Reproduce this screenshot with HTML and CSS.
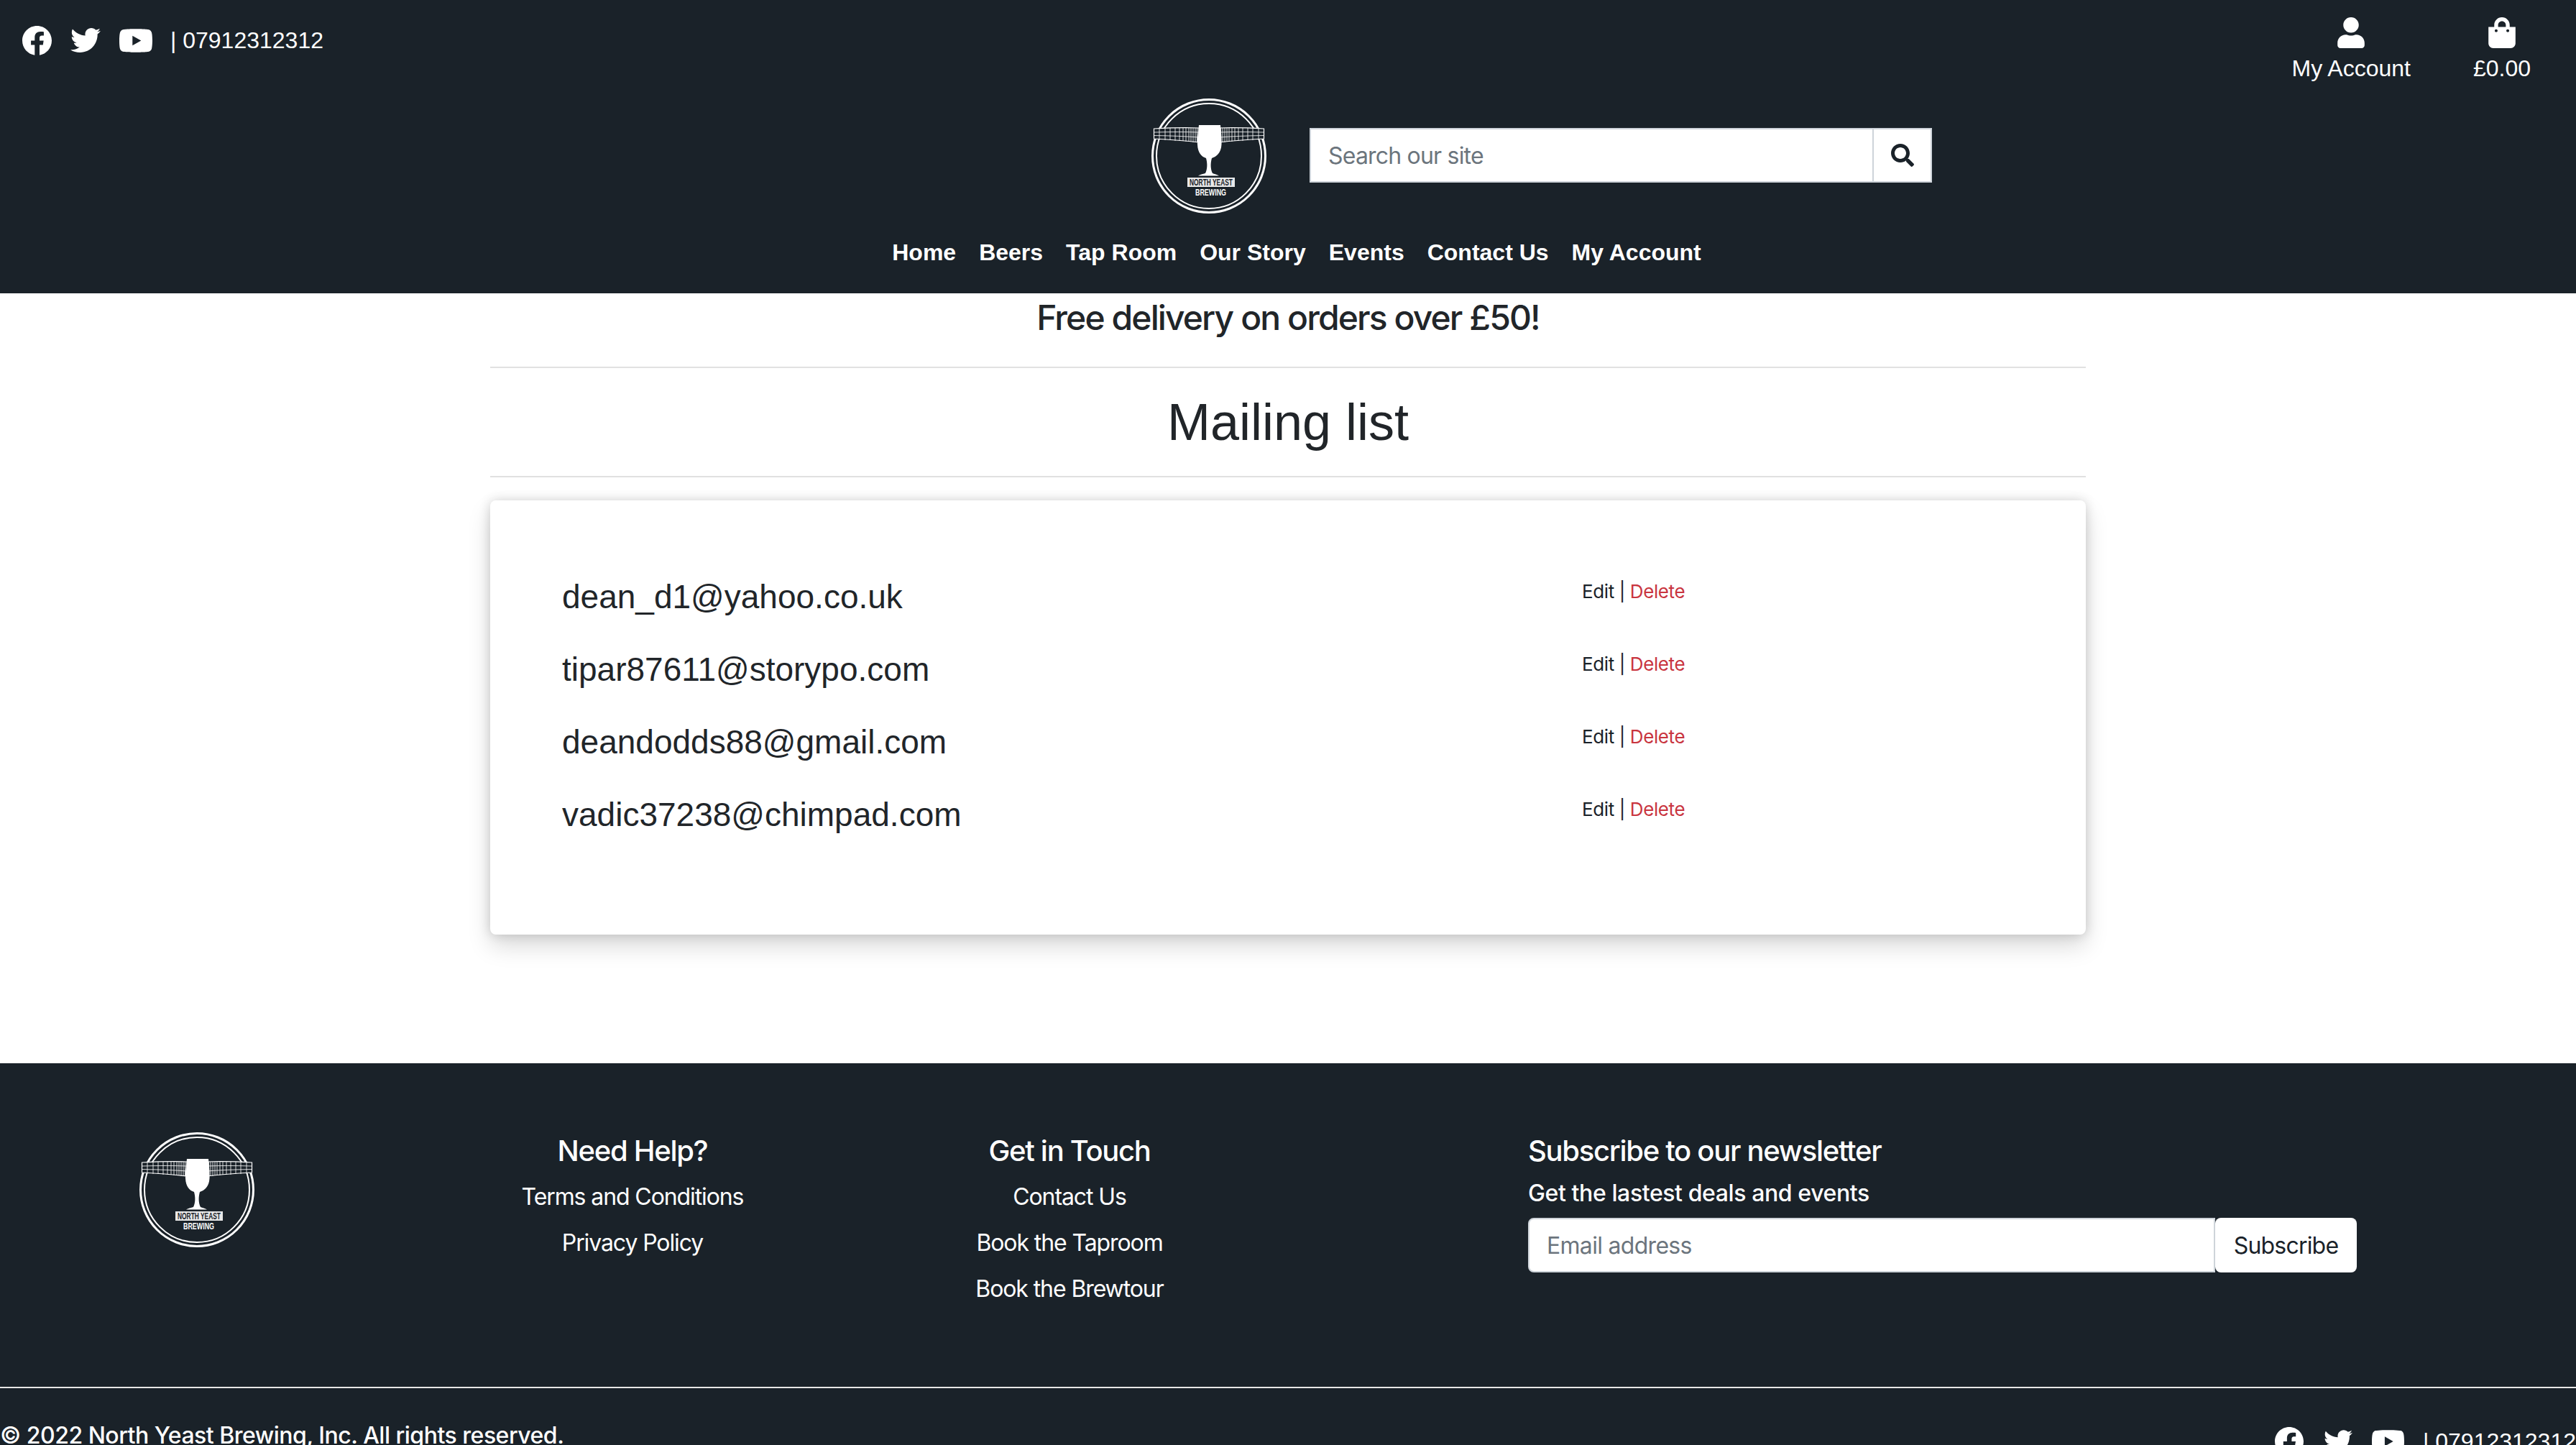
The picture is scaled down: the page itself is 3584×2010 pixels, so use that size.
FILE: index.html
```html
<!DOCTYPE html>
<html lang="en">
<head>
<meta charset="utf-8">
<title>Mailing list | North Yeast Brewing</title>
<link rel="stylesheet" href="styles.css">
</head>
<body>
<svg class="defs" width="0" height="0" aria-hidden="true">
  <symbol id="i-fb" viewBox="8 8 496 496"><path d="M504 256C504 119 393 8 256 8S8 119 8 256c0 123.78 90.69 226.38 209.25 245V327.69h-63V256h63v-54.64c0-62.15 37.92-96.48 96-96.48 27.82 0 56.89 5 56.89 5v61h-31.34c-30.88 0-40.51 19.16-40.51 38.71V256h68.78l-11 71.69h-57.78V501C413.31 482.38 504 379.78 504 256z"/></symbol>
  <symbol id="i-tw" viewBox="0 48 512 416"><path d="M459.37 151.716c.325 4.548.325 9.097.325 13.645 0 138.72-105.583 298.558-298.558 298.558-59.452 0-114.68-17.219-161.137-47.106 8.447.974 16.568 1.299 25.34 1.299 49.055 0 94.213-16.568 130.274-44.832-46.132-.975-84.792-31.188-98.112-72.772 6.498.974 12.995 1.624 19.818 1.624 9.421 0 18.843-1.3 27.614-3.573-48.081-9.747-84.143-51.98-84.143-102.985v-1.299c13.969 7.797 30.214 12.67 47.431 13.319-28.264-18.843-46.781-51.005-46.781-87.391 0-19.492 5.197-37.36 14.294-52.954 51.655 63.675 129.3 105.258 216.365 109.807-1.624-7.797-2.599-15.918-2.599-24.04 0-57.828 46.782-104.934 104.934-104.934 30.213 0 57.502 12.67 76.67 33.137 23.715-4.548 46.456-13.32 66.599-25.34-7.798 24.366-24.366 44.833-46.132 57.827 21.117-2.273 41.584-8.122 60.426-16.243-14.292 20.791-32.161 39.308-52.628 54.253z"/></symbol>
  <symbol id="i-yt" viewBox="15 64 546 384"><path d="M549.655 124.083c-6.281-23.65-24.787-42.276-48.284-48.597C458.781 64 288 64 288 64S117.22 64 74.629 75.486c-23.497 6.322-42.003 24.947-48.284 48.597-11.412 42.867-11.412 132.305-11.412 132.305s0 89.438 11.412 132.305c6.281 23.65 24.787 41.5 48.284 47.821C117.22 448 288 448 288 448s170.78 0 213.371-11.486c23.497-6.321 42.003-24.171 48.284-47.821 11.412-42.867 11.412-132.305 11.412-132.305s0-89.438-11.412-132.305zm-317.51 213.508V175.185l142.739 81.205-142.739 81.201z"/></symbol>
  <symbol id="i-user" viewBox="0 0 448 512"><path d="M224 256c70.7 0 128-57.3 128-128S294.7 0 224 0 96 57.3 96 128s57.3 128 128 128zm89.6 32h-16.7c-22.2 10.2-46.9 16-72.9 16s-50.6-5.8-72.9-16h-16.7C60.2 288 0 348.2 0 422.4V464c0 26.5 21.5 48 48 48h352c26.5 0 48-21.5 48-48v-41.6c0-74.2-60.2-134.4-134.4-134.4z"/></symbol>
  <symbol id="i-bag" viewBox="0 0 448 512"><path d="M352 160v-32C352 57.42 294.579 0 224 0 153.42 0 96 57.42 96 128v32H0v272c0 44.183 35.817 80 80 80h288c44.183 0 80-35.817 80-80V160h-96zm-192-32c0-35.29 28.71-64 64-64s64 28.71 64 64v32H160v-32zm160 120c-13.255 0-24-10.745-24-24s10.745-24 24-24 24 10.745 24 24-10.745 24-24 24zm-192 0c-13.255 0-24-10.745-24-24s10.745-24 24-24 24 10.745 24 24-10.745 24-24 24z"/></symbol>
  <symbol id="i-search" viewBox="0 0 512 512"><path d="M505 442.7L405.3 343c-4.5-4.5-10.6-7-17-7H372c27.6-35.3 44-79.7 44-128C416 93.1 322.9 0 208 0S0 93.1 0 208s93.1 208 208 208c48.3 0 92.7-16.4 128-44v16.3c0 6.4 2.5 12.5 7 17l99.7 99.7c9.4 9.4 24.6 9.4 33.9 0l28.3-28.3c9.4-9.4 9.4-24.6.1-34zM208 336c-70.7 0-128-57.2-128-128 0-70.7 57.2-128 128-128 70.7 0 128 57.2 128 128 0 70.7-57.2 128-128 128z"/></symbol>
  <symbol id="logo-art" viewBox="0 0 160 160">
    <circle cx="80" cy="80" r="78.5" fill="none" stroke="#fff" stroke-width="3"/>
    <circle cx="80" cy="80" r="73" fill="none" stroke="#fff" stroke-width="2"/>
    <path d="M3.500 42Q40 40 66 41V61Q40 58 3.500 56Z" fill="#1a2229" stroke="#fff" stroke-width="1.200"/>
    <path d="M156.500 42Q120 40 94 41V61Q120 58 156.500 56Z" fill="#1a2229" stroke="#fff" stroke-width="1.200"/>
    <path d="M3.500 47Q40 46 66 47M3.500 51.500Q40 52 66 54M94 47Q120 46 156.500 47M94 54Q120 52 156.500 51.500M11 41V57M19 41V58M26 41V58M33 41V59M39 41V59M44 41V59M48 41V60M52 41V60M55 41V60M58 41V61M61 41V61M63.500 41V61M96.500 41V61M99 41V61M102 41V61M105 41V60M108 41V60M112 41V60M116 41V59M121 41V59M127 41V59M134 41V58M141 41V58M149 41V57" stroke="#fff" stroke-width=".8" fill="none"/>
    <path d="M66 37H96C97 48 98 55 97.500 64C97 76 90 81 84 83C82 90 82 98 85 104C87 105 92 106 94 107.500H65C67 106 72 105 75 104C78 98 78 90 76 83C70 81 64.500 76 64 64C63.500 55 65 48 66 37Z" fill="#fff"/>
    <rect x="50" y="110" width="66" height="13" fill="#e8e8e8"/>
  </symbol>
</svg>

<header class="site-header">
  <div class="topbar">
    <div class="socials">
      <a href="#" class="social social-fb"><svg><use href="#i-fb"/></svg></a>
      <a href="#" class="social social-tw"><svg><use href="#i-tw"/></svg></a>
      <a href="#" class="social social-yt"><svg><use href="#i-yt"/></svg></a>
      <span class="phone">| 07912312312</span>
    </div>
    <div class="account-links">
      <a href="#" class="account-link"><svg class="account-icon"><use href="#i-user"/></svg>My Account</a>
      <a href="#" class="account-link"><svg class="account-icon"><use href="#i-bag"/></svg>£0.00</a>
    </div>
  </div>
  <div class="brand-row">
    <div class="brand-logo">
      <svg class="logo" viewBox="0 0 160 160"><use href="#logo-art"/><text class="logo-name" x="83" y="121" text-anchor="middle" textLength="60" lengthAdjust="spacingAndGlyphs">NORTH YEAST</text><text class="logo-sub" x="82.500" y="135" text-anchor="middle" textLength="43" lengthAdjust="spacingAndGlyphs">BREWING</text></svg>
    </div>
    <form class="search">
      <input class="search-input" type="text" placeholder="Search our site">
      <button class="search-btn" type="button"><svg><use href="#i-search"/></svg></button>
    </form>
  </div>
  <nav class="main-nav">
    <a href="#">Home</a>
    <a href="#">Beers</a>
    <a href="#">Tap Room</a>
    <a href="#">Our Story</a>
    <a href="#">Events</a>
    <a href="#">Contact Us</a>
    <a href="#">My Account</a>
  </nav>
</header>

<main class="content">
  <p class="promo">Free delivery on orders over £50!</p>
  <hr class="rule">
  <h1 class="page-title">Mailing list</h1>
  <hr class="rule">
  <section class="card">
    <div class="sub-row"><div class="email">dean_d1@yahoo.co.uk</div><div class="actions"><a href="#">Edit</a> | <a href="#" class="danger">Delete</a></div></div>
    <div class="sub-row"><div class="email">tipar87611@storypo.com</div><div class="actions"><a href="#">Edit</a> | <a href="#" class="danger">Delete</a></div></div>
    <div class="sub-row"><div class="email">deandodds88@gmail.com</div><div class="actions"><a href="#">Edit</a> | <a href="#" class="danger">Delete</a></div></div>
    <div class="sub-row"><div class="email">vadic37238@chimpad.com</div><div class="actions"><a href="#">Edit</a> | <a href="#" class="danger">Delete</a></div></div>
  </section>
</main>

<footer class="site-footer">
  <div class="footer-grid">
    <div class="footer-logo">
      <svg class="logo" viewBox="0 0 160 160"><use href="#logo-art"/><text class="logo-name" x="83" y="121" text-anchor="middle" textLength="60" lengthAdjust="spacingAndGlyphs">NORTH YEAST</text><text class="logo-sub" x="82.500" y="135" text-anchor="middle" textLength="43" lengthAdjust="spacingAndGlyphs">BREWING</text></svg>
    </div>
    <div class="footer-col">
      <h5 class="footer-title">Need Help?</h5>
      <a href="#">Terms and Conditions</a>
      <a href="#">Privacy Policy</a>
    </div>
    <div class="footer-col">
      <h5 class="footer-title">Get in Touch</h5>
      <a href="#">Contact Us</a>
      <a href="#">Book the Taproom</a>
      <a href="#">Book the Brewtour</a>
    </div>
    <div class="newsletter">
      <h5 class="footer-title">Subscribe to our newsletter</h5>
      <p class="newsletter-sub">Get the lastest deals and events</p>
      <form class="newsletter-form">
        <input class="newsletter-input" type="text" placeholder="Email address">
        <button class="newsletter-btn" type="button">Subscribe</button>
      </form>
    </div>
  </div>
  <div class="footer-bottom">
    <span class="copyright">© 2022 North Yeast Brewing, Inc. All rights reserved.</span>
    <div class="socials socials-footer">
      <a href="#" class="social social-fb"><svg><use href="#i-fb"/></svg></a>
      <a href="#" class="social social-tw"><svg><use href="#i-tw"/></svg></a>
      <a href="#" class="social social-yt"><svg><use href="#i-yt"/></svg></a>
      <span class="phone">| 07912312312</span>
    </div>
  </div>
</footer>
</body>
</html>
```
FILE: styles.css
```css
* { box-sizing: border-box; }
html { overflow: hidden; }
body {
  margin: 0;
  background: #fff;
  color: #212529;
  font-family: Inter, "Liberation Sans", sans-serif;
  font-size: 32px;
  line-height: 1.5;
}
a { color: inherit; text-decoration: none; }
svg { fill: currentColor; display: block; }
.defs { position: absolute; }

/* header */
.site-header { height: 408px; background: #1a2229; color: #fff; font-family: "Liberation Sans", sans-serif; }
.topbar { height: 128px; display: flex; justify-content: space-between; align-items: flex-start; }
.socials { display: flex; align-items: center; padding: 32px 0 0 31px; }
.social { display: block; }
.social-fb svg { width: 41px; height: 41px; }
.social-tw { margin-left: 26px; }
.social-tw svg { width: 42px; height: 34px; }
.social-yt { margin-left: 26px; }
.social-yt svg { width: 46px; height: 33px; }
.phone { margin-left: 25px; line-height: 48px; }
.account-links { display: flex; gap: 87px; padding: 24px 63px 0 0; }
.account-link { display: flex; flex-direction: column; align-items: center; line-height: 48px; }
.account-icon { width: 38px; height: 43px; margin-bottom: 4px; }

.brand-row { display: grid; grid-template-columns: 1fr 1fr; height: 178px; margin-top: 9px; }
.brand-logo { display: flex; justify-content: flex-end; padding-right: 30px; }
.logo { width: 160px; height: 160px; }
.search { display: flex; width: 866px; height: 76px; margin: 41px 0 0 30px; }
.search-input {
  flex: 1; min-width: 0; height: 76px; padding: 0 24px;
  border: 2px solid #ced4da; border-right: 0; background: #fff; border-radius: 0;
  font: 32px Inter, sans-serif; letter-spacing: -.8px; color: #212529; outline: none;
}
.search-input::placeholder, .newsletter-input::placeholder { color: #6c757d; opacity: 1; }
.search-btn {
  width: 83px; height: 76px; padding: 0; background: #fff; color: #1a2229;
  border: 2px solid #ced4da; display: flex; align-items: center; justify-content: center;
}
.search-btn svg { width: 32px; height: 32px; }
.main-nav { display: flex; justify-content: center; gap: 32px; padding-left: 24px; font-weight: 700; line-height: 48px; margin-top: 12px; }
.logo-name { font: 700 12.500px "Liberation Sans", sans-serif; fill: #1a2229; }
.logo-sub { font: 700 12.500px "Liberation Sans", sans-serif; fill: #fff; }

/* main */
.content { height: 1071px; width: 2220px; margin: 0 auto; }
.promo { margin: 0; height: 102px; text-align: center; font-size: 48px; font-weight: 500; line-height: 68px; letter-spacing: -1.9px; }
.rule { margin: 0; height: 2px; border: 0; background: #e1e1e1; }
.page-title { margin: 0; height: 150px; text-align: center; font: 400 72px/150px "Liberation Sans", sans-serif; }
.card {
  margin-top: 32px; height: 604px; padding: 84px 100px 116px;
  background: #fff; border-radius: 8px; box-shadow: 0 16px 32px rgba(0,0,0,.15), 0 0 16px rgba(0,0,0,.16);
}
.sub-row { display: grid; grid-template-columns: 1419px 1fr; height: 101px; }
.email { font: 46px/101px "Liberation Sans", sans-serif; }
.actions { font-size: 26px; line-height: 86px; letter-spacing: -.4px; color: #1a2229; }
.danger { color: #c9353f; }

/* footer */
.site-footer { background: #1a2229; color: #fff; height: 640px; padding-top: 92px; }
.footer-grid { display: grid; grid-template-columns: 576px 608px 608px 1fr; height: 358px; }
.footer-logo { padding: 4px 0 0 194px; }
.footer-col { display: flex; flex-direction: column; align-items: center; letter-spacing: -1.1px; }
.footer-col a { line-height: 64px; }
.footer-title { margin: 0; font-size: 40px; font-weight: 500; line-height: 60px; letter-spacing: -1.3px; }
.footer-col .footer-title { margin-bottom: 2px; }
.newsletter { padding-left: 334px; }
.newsletter-sub { margin: 0; font-weight: 500; line-height: 58px; height: 63px; letter-spacing: -.4px; }
.newsletter-form { display: flex; width: 1153px; height: 76px; }
.newsletter-input {
  flex: 1; min-width: 0; padding: 0 24px; height: 76px;
  border: 2px solid #ced4da; border-radius: 8px 0 0 8px; background: #fff;
  font: 32px Inter, sans-serif; letter-spacing: -.7px; outline: none;
}
.newsletter-btn {
  width: 197px; height: 76px; padding: 0; border: 0; border-radius: 8px;
  background: #fff; color: #1a2229; font: 32px Inter, sans-serif; letter-spacing: -.8px;
}
.footer-bottom {
  display: flex; justify-content: space-between; align-items: flex-start;
  border-top: 2px solid #e6e6e6; padding-top: 42px; font-weight: 500;
}
.copyright { line-height: 48px; letter-spacing: -.5px; }
.socials-footer { padding: 8px 0 0 0; font-family: "Liberation Sans", sans-serif; font-weight: 400; }
.socials-footer .social-fb svg { width: 40px; height: 40px; }
.socials-footer .social-tw { margin-left: 28px; }
.socials-footer .social-tw svg { width: 40px; height: 33px; }
.socials-footer .social-yt { margin-left: 27px; }
.socials-footer .social-yt svg { width: 45px; height: 32px; }
.socials-footer .phone { margin-left: 26px; }
```
